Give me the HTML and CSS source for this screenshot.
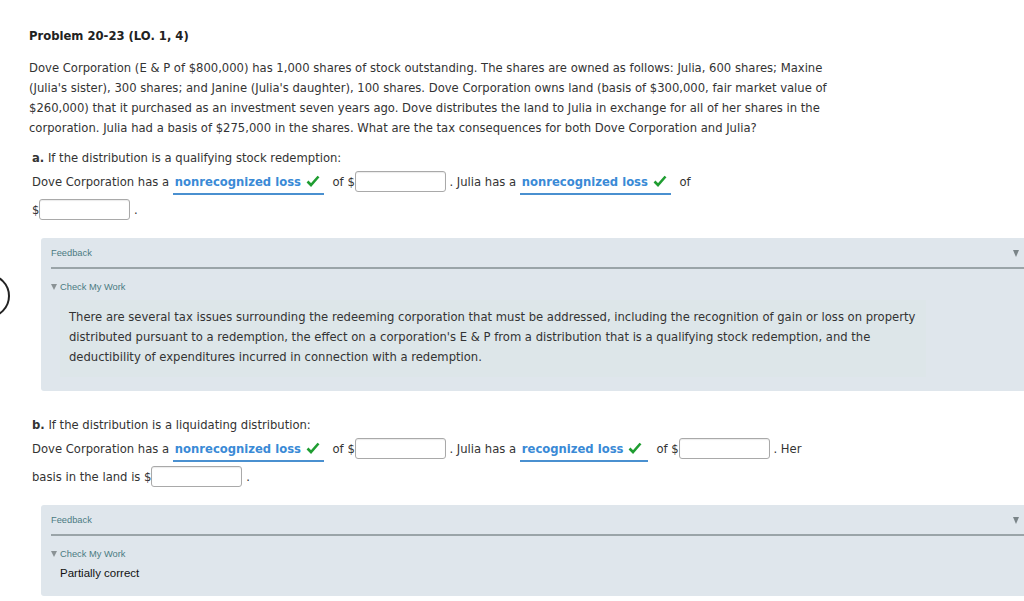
FILE: index.html
```html
<!DOCTYPE html>
<html lang="en">
<head>
<meta charset="utf-8">
<title>Problem 20-23</title>
<link rel="stylesheet" href="styles.css">
</head>
<body>
<div class="ring"></div>
<main class="page">
  <h1 class="title">Problem 20-23 (LO. 1, 4)</h1>
  <p class="intro">Dove Corporation (E &amp; P of $800,000) has 1,000 shares of stock outstanding. The shares are owned as follows: Julia, 600 shares; Maxine (Julia's sister), 300 shares; and Janine (Julia's daughter), 100 shares. Dove Corporation owns land (basis of $300,000, fair market value of $260,000) that it purchased as an investment seven years ago. Dove distributes the land to Julia in exchange for all of her shares in the corporation. Julia had a basis of $275,000 in the shares. What are the tax consequences for both Dove Corporation and Julia?</p>

  <section class="part">
    <p class="part-label"><b>a.</b> If the distribution is a qualifying stock redemption:</p>
    <p class="answer">Dove Corporation has a <span class="select sel-a">nonrecognized loss <svg class="check" viewBox="0 0 14 12"><path d="M1.5 6.5 L5 10 L12.5 1.5" /></svg></span> of $<span class="box"></span> . Julia has a <span class="select sel-a">nonrecognized loss <svg class="check" viewBox="0 0 14 12"><path d="M1.5 6.5 L5 10 L12.5 1.5" /></svg></span> of<br>$<span class="box"></span> .</p>
  </section>

  <section class="feedback fb-a">
    <div class="fb-head"><span class="fb-label">Feedback</span><span class="fb-toggle"></span></div>
    <div class="cmw"><span class="tri"></span>Check My Work</div>
    <div class="fb-body">There are several tax issues surrounding the redeeming corporation that must be addressed, including the recognition of gain or loss on property distributed pursuant to a redemption, the effect on a corporation's E &amp; P from a distribution that is a qualifying stock redemption, and the deductibility of expenditures incurred in connection with a redemption.</div>
  </section>

  <section class="part part-b">
    <p class="part-label"><b>b.</b> If the distribution is a liquidating distribution:</p>
    <p class="answer">Dove Corporation has a <span class="select sel-a">nonrecognized loss <svg class="check" viewBox="0 0 14 12"><path d="M1.5 6.5 L5 10 L12.5 1.5" /></svg></span> of $<span class="box"></span> . Julia has a <span class="select sel-b">recognized loss <svg class="check" viewBox="0 0 14 12"><path d="M1.5 6.5 L5 10 L12.5 1.5" /></svg></span> of $<span class="box"></span> . Her<br>basis in the land is $<span class="box"></span> .</p>
  </section>

  <section class="feedback fb-b">
    <div class="fb-head"><span class="fb-label">Feedback</span><span class="fb-toggle"></span></div>
    <div class="cmw"><span class="tri"></span>Check My Work</div>
    <div class="fb-note">Partially correct</div>
  </section>
</main>
</body>
</html>
```

FILE: styles.css
```css
html, body {
  margin: 0;
  padding: 0;
  background: #ffffff;
  overflow: hidden;
}
body {
  font-family: "DejaVu Sans", Verdana, sans-serif;
  font-size: 11.6px;
  color: #333333;
  width: 1024px;
  height: 601px;
  position: relative;
}
.ring {
  position: absolute;
  left: -34px;
  top: 274px;
  width: 40px;
  height: 40px;
  border: 2px solid #222;
  border-radius: 50%;
}
.page {
  padding: 28px 0 0 29px;
}
.title {
  margin: 0;
  font-size: 11.6px;
  font-weight: bold;
  line-height: 16px;
  color: #222;
}
.intro {
  margin: 14px 0 0 0;
  width: 822px;
  line-height: 20px;
}
.part {
  margin-left: 3px;
}
.part-label {
  margin: 10px 0 0 0;
  line-height: 20px;
}
.answer {
  margin: 0;
  line-height: 28px;
}
.select {
  display: inline-block;
  height: 20px;
  line-height: 19px;
  border-bottom: 2px solid #4a90d0;
  color: #3a8ad6;
  font-weight: bold;
  padding: 0 0 0 2px;
  margin: 0 5px 0 0;
  vertical-align: baseline;
  white-space: nowrap;
}
.sel-a { width: 149px; }
.sel-b { width: 126px; }
.check {
  width: 14px;
  height: 12px;
  vertical-align: -1px;
  margin-left: 1px;
}
.check path {
  fill: none;
  stroke: #1f9d31;
  stroke-width: 2.6;
}
.box {
  display: inline-block;
  width: 89px;
  height: 19px;
  border: 1px solid #a9a9a9;
  border-radius: 3px;
  box-shadow: inset 0 1px 1px rgba(0,0,0,0.08);
  vertical-align: -6px;
  background: #fff;
}
.feedback {
  margin: 14px 0 0 12px;
  width: 990px;
  background: #dfe6ec;
  border-radius: 3px;
  font-family: "Liberation Sans", Arial, sans-serif;
}
.fb-head {
  display: flex;
  justify-content: space-between;
  align-items: flex-start;
  margin: 0 0 0 10px;
  padding: 8px 10px 0 0;
  height: 21px;
  border-bottom: 2px solid #9aa4a8;
}
.fb-label {
  font-size: 9.3px;
  color: #4b7b82;
  line-height: 14px;
}
.fb-toggle {
  width: 0;
  height: 0;
  margin-top: 4px;
  margin-right: 2px;
  border-left: 3.5px solid transparent;
  border-right: 3.5px solid transparent;
  border-top: 7px solid #7a8488;
}
.cmw {
  margin: 11px 0 0 10px;
  font-size: 9.3px;
  color: #4b7b82;
  line-height: 14px;
  display: flex;
  align-items: center;
}
.tri {
  width: 0;
  height: 0;
  margin-right: 3px;
  margin-top: -1px;
  border-left: 3px solid transparent;
  border-right: 3px solid transparent;
  border-top: 6px solid #8a9295;
}
.fb-body {
  margin: 6px 0 0 19px;
  width: 848px;
  padding: 7px 9px 10px 9px;
  background: #dde6e9;
  font-family: "DejaVu Sans", Verdana, sans-serif;
  font-size: 11.6px;
  color: #333;
  line-height: 20px;
}
.fb-a {
  padding-bottom: 14px;
}
.part-b .part-label {
  margin-top: 24px;
}
.fb-note {
  margin: 3px 0 0 19px;
  font-size: 11.5px;
  color: #111;
  line-height: 18px;
  padding-bottom: 14px;
}
```
